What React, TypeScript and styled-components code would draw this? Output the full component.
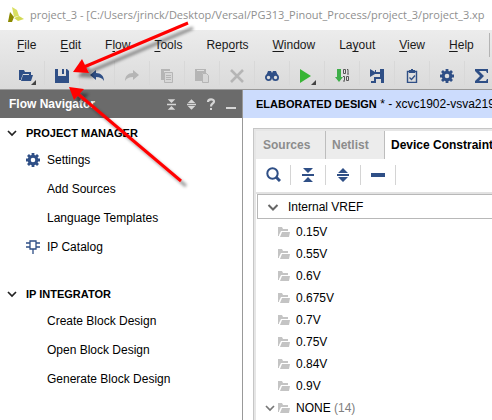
import React from "react";
import styled, { createGlobalStyle, css } from "styled-components";

const NAVY = "#2f4f86";

const GlobalStyle = createGlobalStyle`
  * { box-sizing: border-box; }
  body {
    margin: 0;
    background: #fff;
    color: #000;
    font: 12px/16px "Liberation Sans", Arial, sans-serif;
    overflow: hidden;
  }
  button {
    margin: 0;
    padding: 0;
    border: 0;
    background: none;
    color: inherit;
    font: inherit;
    cursor: pointer;
  }
  ul { margin: 0; padding: 0; list-style: none; }
  svg { display: block; flex: none; }
`;

const Window = styled.div`
  position: relative;
  display: flex;
  flex-direction: column;
  height: 100vh;
  overflow: hidden;
`;

const TitleBar = styled.header`
  display: flex;
  align-items: center;
  gap: 6px;
  height: 30px;
  padding-left: 8px;
  color: #8f8f8f;
  font: 11px/16px "Open Sans", "Noto Sans", sans-serif;
  white-space: nowrap;
`;

const Chrome = styled.div`
  background: linear-gradient(#ececec, #dadada);
  border-bottom: 1px solid #999;
`;

const MenuBar = styled.div`
  display: flex;
  align-items: center;
  height: 30px;
  padding: 0 2px 0 17px;
`;

const MenuList = styled.nav`
  display: flex;
  flex: 1;
  gap: 24px;
  min-width: 0;
`;

const MenuButton = styled.button`
  color: #1a1a1a;
  font-size: 12px;
  white-space: nowrap;
  u { text-underline-offset: 2px; }
`;

const MenuEnd = styled.span`
  flex: none;
  width: 1px;
  height: 24px;
  background: #b4b4b4;
`;

const ToolBar = styled.div`
  display: flex;
  height: 29px;
  padding: 1px 0 4px 10px;
`;

const ToolButton = styled.button<{ $muted?: boolean }>`
  display: flex;
  flex: none;
  align-items: center;
  justify-content: center;
  width: 35px;
  height: 24px;
  padding-top: 6px;
  border-right: 1px solid #d8d8d8;
  color: ${(p) => (p.$muted ? "#b5b5b5" : NAVY)};
`;

const Workspace = styled.div`
  display: grid;
  flex: 1;
  grid-template-columns: 242px minmax(0, 1fr);
  min-height: 0;
`;

const Sidebar = styled.aside`
  display: flex;
  flex-direction: column;
`;

const PaneHeader = styled.div<{ $tone: "dark" | "blue" }>`
  display: flex;
  align-items: center;
  height: 28px;
  white-space: nowrap;
  ${(p) =>
    p.$tone === "dark"
      ? css`
          padding: 0 5px 0 9px;
          background: #6b6b6b;
          color: #fff;
          font-weight: bold;
        `
      : css`
          padding: 0 0 0 13px;
          background: #ccdcfd;
        `}
`;

const DesignTitle = styled.b`
  font-size: 11px;
`;

const HeaderTools = styled.div`
  display: flex;
  gap: 8px;
  margin-left: auto;
  color: #d6d6d6;
`;

const HeaderTool = styled.button`
  display: flex;
  align-items: center;
  justify-content: center;
  width: 12px;
  height: 14px;
`;

const Section = styled.section`
  padding-bottom: 18px;
`;

const SectionTitle = styled.button`
  display: flex;
  align-items: center;
  gap: 8px;
  width: 100%;
  height: 27px;
  padding: 3px 0 0 6px;
  font-size: 11px;
  font-weight: bold;
`;

const NavItem = styled.button`
  display: flex;
  align-items: center;
  gap: 7px;
  width: 100%;
  height: 29px;
  padding-left: 26px;
  text-align: left;
`;

const IconSlot = styled.span`
  display: flex;
  width: 14px;
  height: 14px;
`;

const NavIcon = styled(IconSlot)`
  color: ${NAVY};
`;

const Main = styled.main`
  display: flex;
  flex-direction: column;
  min-width: 0;
  border-left: 1px solid #999;
`;

const Panel = styled.div`
  display: flex;
  flex: 1;
  flex-direction: column;
  margin: 10px 0 0 10px;
  border: solid #c6c6c6;
  border-width: 1px 0 0 1px;
  box-shadow: inset 2px 2px #e6e6e6;
  padding: 2px 0 0 2px;
`;

const Tabs = styled.div`
  display: flex;
  height: 28px;
`;

const Tab = styled.button<{ $active?: boolean }>`
  flex: none;
  min-width: ${(p) => (p.$active ? "0" : "59px")};
  padding: 0 0 0 6px;
  border-right: 1px solid #bdbdbd;
  background: ${(p) => (p.$active ? "#fff" : "#ececec")};
  color: ${(p) => (p.$active ? "#000" : "#8c8c8c")};
  font-weight: bold;
  text-align: left;
  white-space: nowrap;
  &:first-child { min-width: 70px; padding-left: 7px; }
  &:last-child { border-right: 0; }
`;

const PanelTools = styled.div`
  display: flex;
  align-items: center;
  height: 35px;
  padding-bottom: 2px;
  border-bottom: 2px solid #e2e2e2;
`;

const PanelTool = styled.button`
  display: flex;
  align-items: center;
  justify-content: center;
  width: 35px;
  height: 20px;
  border-right: 1px solid #d4d4d4;
  color: ${NAVY};
`;

const GroupRow = styled.button`
  display: flex;
  align-items: center;
  gap: 9px;
  height: 25px;
  margin: 0 0 2px 1px;
  padding-left: 9px;
  border: solid #b8b8b8;
  border-width: 1px 0 1px 1px;
  color: #000;
`;

const TreeRow = styled.li`
  display: flex;
  align-items: center;
  height: 22px;
  padding-left: 8px;
`;

const TreeToggle = styled.button`
  width: 14px;
  height: 14px;
`;

const TreeLabel = styled.span`
  margin-left: 6px;
`;

const Count = styled.span`
  color: #808080;
`;

const Callouts = styled.svg`
  position: absolute;
  top: 0;
  left: 0;
  pointer-events: none;
`;

type IconProps = { children: React.ReactNode; w?: number; h?: number };
const Icon = ({ children, w = 16, h = 16 }: IconProps) => (
  <svg width={w} height={h} viewBox={`0 0 ${w} ${h}`} fill="currentColor" aria-hidden="true">
    {children}
  </svg>
);

const Logo = () => (
  <Icon w={16} h={16}>
    <path d="M4 0l5 3 2 6-5 1z" fill="#d9df62" />
    <path d="M2 5l4 5-2 5H0z" fill="#8c8a00" />
    <path d="M6 11l5-2 5 3-6 2z" fill="#d3da55" />
  </Icon>
);

const Chevron = ({ color = "#222", bold }: { color?: string; bold?: boolean }) => (
  <Icon w={12} h={12}>
    <path d={bold ? "M1.5 4L6 8.5 10.5 4" : "M2 4l4 4 4-4"} fill="none" stroke={color} strokeWidth={bold ? 2 : 1.7} />
  </Icon>
);

const OpenIcon = () => (
  <Icon w={18} h={18}>
    <path d="M1 3h5l1 2h6v3h-2V7H5L3 12v1H1z" />
    <path d="M5 8h10l-2 6H3z" />
    <path d="M18 13v5h-5z" fill="#444" />
  </Icon>
);
const SaveIcon = () => (
  <Icon w={14} h={14}>
    <path fillRule="evenodd" d="M0 0h3v7h8V0h1l2 2v12H0zM7 0h2v5H7z" />
  </Icon>
);
const UndoIcon = () => (
  <Icon w={14} h={14}>
    <path d="M0 6l6-5v3c5 0 8 3 8 8-2-3-4-4-8-4v3z" />
  </Icon>
);
const RedoIcon = () => (
  <Icon w={14} h={14}>
    <path d="M14 6L8 1v3c-5 0-8 3-8 8 2-3 4-4 8-4v3z" />
  </Icon>
);
const CopyIcon = () => (
  <Icon w={14} h={16}>
    <path d="M1 1h9v2H4v9H1z" />
    <path d="M4.5 4.5h8v10h-8z" fill="#d7d7d7" stroke="currentColor" />
    <path d="M6 7h5v1H6zM6 9h5v1H6zM6 11h5v1H6z" />
  </Icon>
);
const PasteIcon = () => (
  <Icon w={16} h={16}>
    <path fillRule="evenodd" d="M1 1h11v4H8v8H1zM3 2v1h7V2z" />
    <path d="M8.5 5.5h4l2 2v7h-6z" fill="#d7d7d7" stroke="currentColor" />
  </Icon>
);
const DeleteIcon = () => (
  <Icon w={14} h={14}>
    <path d="M1 1l12 12M13 1L1 13" stroke="currentColor" strokeWidth="2.6" />
  </Icon>
);
const FindIcon = () => (
  <Icon w={14} h={14}>
    <path d="M3 2h3l1 2 1-2h3l2 5H9v2H5V7H1z" />
    <circle cx="3.5" cy="8.5" r="2.6" fill="#dedede" stroke="currentColor" strokeWidth="1.8" />
    <circle cx="10.5" cy="8.5" r="2.6" fill="#dedede" stroke="currentColor" strokeWidth="1.8" />
  </Icon>
);
const RunIcon = () => (
  <Icon w={18} h={18}>
    <path d="M2 2l11 7-11 7z" fill="#38b535" />
    <path d="M18 13v5h-5z" fill="#444" />
  </Icon>
);
const BitstreamIcon = () => (
  <Icon w={14} h={14}>
    <path d="M2 0h4v8h2l-4 5-4-5h2z" fill="#3eae49" />
    <path d="M8.5.5h2v4h-2zM12 .5h1v4M12 5h2M8 7.5h1.5v4M8 12h2M11.5 7.5h2v4h-2z" fill="none" stroke="#555" />
  </Icon>
);
const ProbeIcon = () => (
  <Icon w={14} h={14}>
    <path d="M0 0l5 3V1h1v2h4V0h4v14h-3v-4H6v4H1v-2h3V8h6V5H5L0 8z" />
  </Icon>
);
const ReportIcon = () => (
  <Icon w={12} h={14}>
    <path d="M1.5 2.5h9v11h-9z" fill="none" stroke="currentColor" strokeWidth="1.4" />
    <path d="M3 1h2V0h2v1h2v3H3z" />
    <path d="M3.5 8.5L5.5 10.5 9 6.5" fill="none" stroke="currentColor" strokeWidth="1.3" />
  </Icon>
);
const GearIcon = () => (
  <Icon w={14} h={14}>
    <circle cx="7" cy="7" r="3.8" fill="none" stroke="currentColor" strokeWidth="3" />
    <path d="M7 0v3M7 11v3M0 7h3M11 7h3M2 2l2 2M10 10l2 2M12 2l-2 2M4 10l-2 2" stroke="currentColor" strokeWidth="2.8" />
  </Icon>
);
const SigmaIcon = () => (
  <Icon w={14} h={14}>
    <path d="M0 0h13v4h-1l-1-2H4l5 5-5 5h7l1-2h1v4H0v-2l5-5-5-5z" />
  </Icon>
);
const CollapseIcon = ({ size = 12 }: { size?: number }) => (
  <svg width={size} height={size + 2} viewBox="0 0 12 14" fill="currentColor" aria-hidden="true">
    <path d="M1 0h10L6 5zM0 6h12v2H0zM6 9l5 5H1z" />
  </svg>
);
const ExpandIcon = ({ size = 12 }: { size?: number }) => (
  <svg width={size} height={size + 2} viewBox="0 0 12 14" fill="currentColor" aria-hidden="true">
    <path d="M6 0l5 5H1zM0 6h12v2H0zM1 9h10l-5 5z" />
  </svg>
);
const SearchIcon = () => (
  <Icon w={15} h={15}>
    <circle cx="6.5" cy="6.5" r="5.2" fill="none" stroke="currentColor" strokeWidth="2" />
    <path d="M10 10l4 4" stroke="currentColor" strokeWidth="3" />
  </Icon>
);
const MinusIcon = () => (
  <Icon w={14} h={14}>
    <path d="M0 5h14v4H0z" />
  </Icon>
);
const HelpIcon = () => (
  <Icon w={12} h={14}>
    <path d="M3 5C3 1.5 9 1.5 9 4.5 9 6.5 6 6.5 6 9.5" fill="none" stroke="currentColor" strokeWidth="2.2" />
    <path d="M5 11h2v2H5z" />
  </Icon>
);
const MinimizeIcon = () => (
  <Icon w={12} h={14}>
    <path d="M1 10h10v2H1z" />
  </Icon>
);
const ChipIcon = () => (
  <Icon w={14} h={14}>
    <path d="M4 1h6v8H4zM0 3h4M0 7h4M10 3h4M10 7h4M7 9v5" fill="none" stroke="currentColor" strokeWidth="1.3" />
  </Icon>
);
const FolderIcon = () => (
  <Icon w={12} h={12}>
    <path d="M0 1h4l1 2h5v2H3L1 9v1H0z" fill="#c4c4c4" />
    <path d="M4 6h8l-1 5H2z" fill="#c4c4c4" />
  </Icon>
);

const menus: [string, string, string][] = [
  ["", "F", "ile"],
  ["", "E", "dit"],
  ["F", "l", "ow"],
  ["", "T", "ools"],
  ["Rep", "o", "rts"],
  ["", "W", "indow"],
  ["La", "y", "out"],
  ["", "V", "iew"],
  ["", "H", "elp"],
];

const tools: { name: string; icon: React.ReactNode; muted?: boolean }[] = [
  { name: "Open", icon: <OpenIcon /> },
  { name: "Save", icon: <SaveIcon /> },
  { name: "Undo", icon: <UndoIcon /> },
  { name: "Redo", icon: <RedoIcon />, muted: true },
  { name: "Copy", icon: <CopyIcon />, muted: true },
  { name: "Paste", icon: <PasteIcon />, muted: true },
  { name: "Delete", icon: <DeleteIcon />, muted: true },
  { name: "Find", icon: <FindIcon /> },
  { name: "Run", icon: <RunIcon /> },
  { name: "Generate bitstream", icon: <BitstreamIcon /> },
  { name: "Set up debug", icon: <ProbeIcon /> },
  { name: "Report", icon: <ReportIcon /> },
  { name: "Settings", icon: <GearIcon /> },
  { name: "Summary", icon: <SigmaIcon /> },
];

const sections: { title: string; items: { label: string; icon?: React.ReactNode }[] }[] = [
  {
    title: "PROJECT MANAGER",
    items: [
      { label: "Settings", icon: <GearIcon /> },
      { label: "Add Sources" },
      { label: "Language Templates" },
      { label: "IP Catalog", icon: <ChipIcon /> },
    ],
  },
  {
    title: "IP INTEGRATOR",
    items: [{ label: "Create Block Design" }, { label: "Open Block Design" }, { label: "Generate Block Design" }],
  },
];

const voltages = ["0.15V", "0.55V", "0.6V", "0.675V", "0.7V", "0.75V", "0.84V", "0.9V"];

export default function App() {
  return (
    <Window>
      <GlobalStyle />
      <TitleBar>
        <Logo />
        <span>project_3 - [C:/Users/jrinck/Desktop/Versal/PG313_Pinout_Process/project_3/project_3.xp</span>
      </TitleBar>
      <Chrome>
        <MenuBar>
          <MenuList>
            {menus.map(([before, key, after]) => (
              <MenuButton key={before + key + after}>
                {before}
                <u>{key}</u>
                {after}
              </MenuButton>
            ))}
          </MenuList>
          <MenuEnd />
        </MenuBar>
        <ToolBar>
          {tools.map((t) => (
            <ToolButton key={t.name} aria-label={t.name} $muted={t.muted}>
              {t.icon}
            </ToolButton>
          ))}
        </ToolBar>
      </Chrome>
      <Workspace>
        <Sidebar>
          <PaneHeader $tone="dark">
            Flow Navigator
            <HeaderTools>
              <HeaderTool aria-label="Collapse all"><CollapseIcon size={9} /></HeaderTool>
              <HeaderTool aria-label="Expand all"><ExpandIcon size={9} /></HeaderTool>
              <HeaderTool aria-label="Help"><HelpIcon /></HeaderTool>
              <HeaderTool aria-label="Minimize"><MinimizeIcon /></HeaderTool>
            </HeaderTools>
          </PaneHeader>
          {sections.map((s) => (
            <Section key={s.title}>
              <SectionTitle>
                <Chevron />
                {s.title}
              </SectionTitle>
              {s.items.map((item) => (
                <NavItem key={item.label}>
                  <NavIcon>{item.icon}</NavIcon>
                  {item.label}
                </NavItem>
              ))}
            </Section>
          ))}
        </Sidebar>
        <Main>
          <PaneHeader $tone="blue">
            <DesignTitle>ELABORATED DESIGN</DesignTitle>&nbsp;* - xcvc1902-vsva219
          </PaneHeader>
          <Panel>
            <Tabs>
              <Tab>Sources</Tab>
              <Tab>Netlist</Tab>
              <Tab $active>Device Constraints</Tab>
            </Tabs>
            <PanelTools>
              <PanelTool aria-label="Search"><SearchIcon /></PanelTool>
              <PanelTool aria-label="Collapse all"><CollapseIcon /></PanelTool>
              <PanelTool aria-label="Expand all"><ExpandIcon /></PanelTool>
              <PanelTool aria-label="Remove"><MinusIcon /></PanelTool>
            </PanelTools>
            <GroupRow>
              <Chevron color="#666" bold />
              Internal VREF
            </GroupRow>
            <ul>
              {voltages.map((v) => (
                <TreeRow key={v}>
                  <IconSlot />
                  <FolderIcon />
                  <TreeLabel>{v}</TreeLabel>
                </TreeRow>
              ))}
              <TreeRow>
                <TreeToggle aria-label="Expand NONE">
                  <Chevron color="#777" />
                </TreeToggle>
                <FolderIcon />
                <TreeLabel>
                  NONE <Count>(14)</Count>
                </TreeLabel>
              </TreeRow>
            </ul>
          </Panel>
        </Main>
      </Workspace>
      <Callouts width="220" height="210" viewBox="0 0 220 210" aria-hidden="true">
        <defs>
          <filter id="soft" x="-20%" y="-20%" width="140%" height="140%">
            <feDropShadow dx="5" dy="5" stdDeviation="1.5" floodColor="#000" floodOpacity="0.4" />
          </filter>
        </defs>
        <g fill="#f00" stroke="#f00" filter="url(#soft)">
          <path d="M188 23L84 67" strokeWidth="3" />
          <path d="M73 72l9-13 7 14z" stroke="none" />
          <path d="M181 181L78 94" strokeWidth="3" />
          <path d="M69 87l15 2-10 11z" stroke="none" />
        </g>
      </Callouts>
    </Window>
  );
}
